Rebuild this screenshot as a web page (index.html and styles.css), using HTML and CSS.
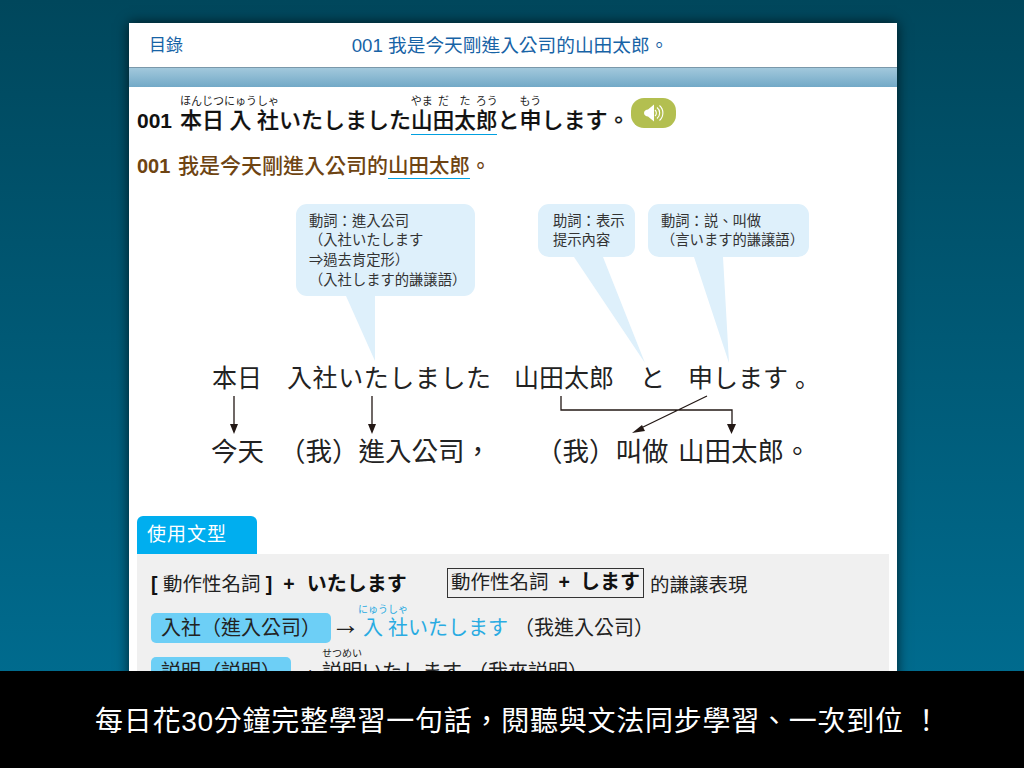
FILE: index.html
```html
<!DOCTYPE html>
<html lang="zh-Hant">
<head>
  <meta charset="UTF-8" />
  <title>001 我是今天剛進入公司的山田太郎。</title>
  <link rel="stylesheet" href="styles.css">
</head>
<body>

<div class="page">
  <div class="top-bar">
    <span class="toc-link">目錄</span>
    <span class="top-title">001 我是今天剛進入公司的山田太郎。</span>
  </div>
  <div class="sub-bar"></div>

  <div class="sentence-jp">
    <span class="num">001 </span><ruby>本日<rt>ほんじつ</rt></ruby><ruby>入<rt>にゅう</rt></ruby><ruby>社<rt>しゃ</rt></ruby>いたしました<span class="mark"><ruby>山<rt>やま</rt></ruby><ruby>田<rt>だ</rt></ruby><ruby>太<rt>た</rt></ruby><ruby>郎<rt>ろう</rt></ruby></span>と<ruby>申<rt>もう</rt></ruby>します。<span class="sound-btn">
      <svg width="22" height="18" viewBox="0 0 22 18">
        <path d="M1 9c0-2 2-3.500 4-3.500L11 .5v17l-6-5c-2 0-4-1.500-4-3.500z" fill="#fff"/>
        <path d="M12 6a4 4 0 0 1 0 6M14 3.500a7 7 0 0 1 0 11M16.500 1.500a10 10 0 0 1 0 15" fill="none" stroke="#fff" stroke-width="1.100"/>
      </svg>
    </span>
  </div>

  <div class="sentence-zh"><span class="num">001 </span>我是今天剛進入公司的<span class="mark">山田太郎</span>。</div>

  <div class="diagram">
    <svg width="768" height="300" viewBox="129 195 768 300">
      <g fill="#def0fb">
        <path d="M307 204h157a11 11 0 0 1 11 11v70a11 11 0 0 1-11 11h-89v65l-29-65h-39a11 11 0 0 1-11-11v-70a11 11 0 0 1 11-11z"/>
        <path d="M549 204h75a11 11 0 0 1 11 11v31a11 11 0 0 1-11 11h-21l42 106-71-106h-25a11 11 0 0 1-11-11v-31a11 11 0 0 1 11-11z"/>
        <path d="M659 204h139a11 11 0 0 1 11 11v31a11 11 0 0 1-11 11h-75l6 106-35-106h-35a11 11 0 0 1-11-11v-31a11 11 0 0 1 11-11z"/>
      </g>
      <g class="note">
        <text x="309" y="226">動詞：進入公司</text>
        <text x="309" y="245">（入社いたします</text>
        <text x="309" y="265">⇒過去肯定形）</text>
        <text x="309" y="285">（入社します的謙譲語）</text>
        <text x="553" y="226">助詞：表示</text>
        <text x="553" y="245">提示內容</text>
        <text x="661" y="226">動詞：説、叫做</text>
        <text x="661" y="245">（言います的謙譲語）</text>
      </g>
      <g class="big">
        <text x="212" y="387">本日</text>
        <text x="287" y="387" textLength="204">入社いたしました</text>
        <text x="514" y="387">山田太郎</text>
        <text x="640" y="387">と</text>
        <text x="688" y="387">申します</text>
        <text x="795" y="387" class="jp-stop">。</text>
      </g>
      <g class="big big-zh">
        <text x="211" y="461">今天</text>
        <text x="279" y="461">（我）進入公司，</text>
        <text x="536" y="461">（我）叫做</text>
        <text x="678" y="461">山田太郎。</text>
      </g>
      <g fill="none" stroke="#231815" stroke-width="1.300">
        <path d="M234 396v30M372 396v30M561 396v14h171v16M707 396l-68 33"/>
      </g>
      <g fill="#231815">
        <path d="M230 424h8l-4 10zM368 424h8l-4 10zM727 424h9l-4.500 10zM632 433l10-8 3 6z"/>
      </g>
    </svg>
  </div>

  <div class="tab">使用文型</div>
  <div class="pattern-panel">
    <div class="pattern-head">
      <span class="formula"><b>[</b> 動作性名詞 <b>]</b><b class="plus">+</b><b class="kana">いたします</b></span>
      <span class="formula-box"><span>動作性名詞</span><b>+</b><b class="kana">します</b></span>
      <span>的謙譲表現</span>
    </div>
    <div class="example-row">
      <span class="pill">入社（進入公司）</span>
      <span class="arrow">→</span>
      <span class="reading blue"><ruby>入<rt>にゅう</rt></ruby><ruby>社<rt>しゃ</rt></ruby>いたします</span>
      <span class="reading meaning">（我進入公司）</span>
    </div>
    <div class="example-row last">
      <span class="pill">説明（説明）</span>
      <span class="arrow">→</span>
      <span class="reading"><ruby>説明<rt>せつめい</rt></ruby>いたします</span>
      <span class="reading meaning">（我來説明）</span>
    </div>
  </div>
</div>

<div class="caption">每日花30分鐘完整學習一句話，閱聽與文法同步學習、一次到位 ！</div>

</body>
</html>
```

FILE: styles.css
```css
* { box-sizing: border-box; }

html, body {
  margin: 0;
  height: 768px;
  overflow: hidden;
}

body {
  background: linear-gradient(#00475c, #007095);
  font-family: "Liberation Sans", "Noto Sans CJK TC", sans-serif;
  color: #111;
  position: relative;
}

.page {
  width: 768px;
  margin: 23px 0 0 129px;
  background: #fff;
  box-shadow: 0 0 12px rgba(0,0,0,0.7);
  height: 745px;
  overflow: hidden;
}

.top-bar {
  height: 45px;
  display: grid;
  grid-template-columns: 1fr auto 1fr;
  align-items: center;
  padding: 0 20px 3px;
  border-bottom: 1px solid #7a98aa;
  color: #1763a6;
  font-size: 18.700px;
}

.toc-link { font-size: 17px; }
.top-title { margin-right: 6px; }

.sub-bar {
  height: 19px;
  background: linear-gradient(#a2c8dc, #72a9c7);
}

rt {
  font-size: 10px;
  font-weight: normal;
  color: #222;
  -webkit-text-stroke: 0;
}

.sentence-jp {
  font-size: 22px;
  font-weight: 500;
  line-height: 28px;
  padding: 11px 8px 0;
  height: 53px;
  white-space: nowrap;
  color: #111;
  -webkit-text-stroke: 0.2px #111;
}

.sentence-jp rt { font-size: 11px; padding-bottom: 1px; }
.sentence-jp .mark { font-size: 21.500px; }

.num { font-size: 21px; font-weight: bold; margin-right: 2px; -webkit-text-stroke: 0; }

.mark { border-bottom: 1px solid #00a0e0; padding-bottom: 1px; }

.sound-btn {
  display: inline-flex;
  align-items: center;
  justify-content: center;
  width: 45px;
  height: 30px;
  margin-left: 2px;
  border-radius: 13px;
  background: #b3bf50;
  vertical-align: 6px;
}

.sentence-zh {
  font-size: 21px;
  font-weight: 500;
  color: #6e4412;
  padding: 12px 8px 0;
  line-height: 28px;
  height: 55px;
  white-space: nowrap;
}

.sentence-zh .num { font-size: 20px; }
.sentence-zh .mark { font-size: 20.500px; }

.diagram { height: 321px; }
.diagram svg { display: block; }

.note text {
  font-size: 14.300px;
  fill: #333;
}

.big text {
  font-size: 25px;
  fill: #222;
}

.big-zh text { font-size: 26.500px; }

.big .jp-stop { font-family: "Noto Sans CJK JP", sans-serif; }

.tab {
  width: 120px;
  height: 38px;
  margin-left: 8px;
  background: #00aeef;
  border-radius: 6px 6px 0 0;
  color: #fff;
  font-size: 19px;
  line-height: 38px;
  padding-left: 10px;
  letter-spacing: 1px;
}

.pattern-panel {
  margin: 0 8px;
  background: #f0f0f0;
  padding: 14px 14px 0;
  font-size: 19.500px;
  color: #222;
  height: 200px;
}

.pattern-head {
  display: flex;
  align-items: center;
  height: 30px;
}

.pattern-head b { color: #111; }
.kana { font-size: 20px; }
.plus { margin: 0 12px 0 11px; }

.formula { width: 296px; margin-top: -2px; }

.formula-box {
  display: flex;
  justify-content: space-between;
  width: 197px;
  border: 1px solid #333;
  padding: 0 3px;
  height: 30px;
  line-height: 27px;
  margin-right: 6px;
}

.example-row {
  display: flex;
  align-items: flex-end;
  height: 30px;
  margin-top: 15px;
  white-space: nowrap;
  font-size: 20px;
}

.example-row.last { margin-top: 14px; }

.pill {
  display: inline-block;
  height: 30px;
  line-height: 30px;
  padding: 0 10px;
  background: #6dcff6;
  border-radius: 5px;
  margin-right: 5px;
}

.arrow {
  font-size: 29px;
  line-height: 30px;
  margin: 0 -2px 4px -5px;
}

.last .arrow { margin-right: 2px; }

.reading { margin-bottom: 2px; }
.reading rt { padding-bottom: 2px; }

.blue { color: #29abe2; }
.blue rt { color: #29abe2; }

.meaning { margin-left: 6px; }

.caption {
  position: absolute;
  left: 0;
  right: 0;
  bottom: 0;
  height: 97px;
  padding-left: 12px;
  background: #000;
  color: #fff;
  text-align: center;
  font-size: 28px;
  line-height: 102px;
  letter-spacing: 0.750px;
}
```
